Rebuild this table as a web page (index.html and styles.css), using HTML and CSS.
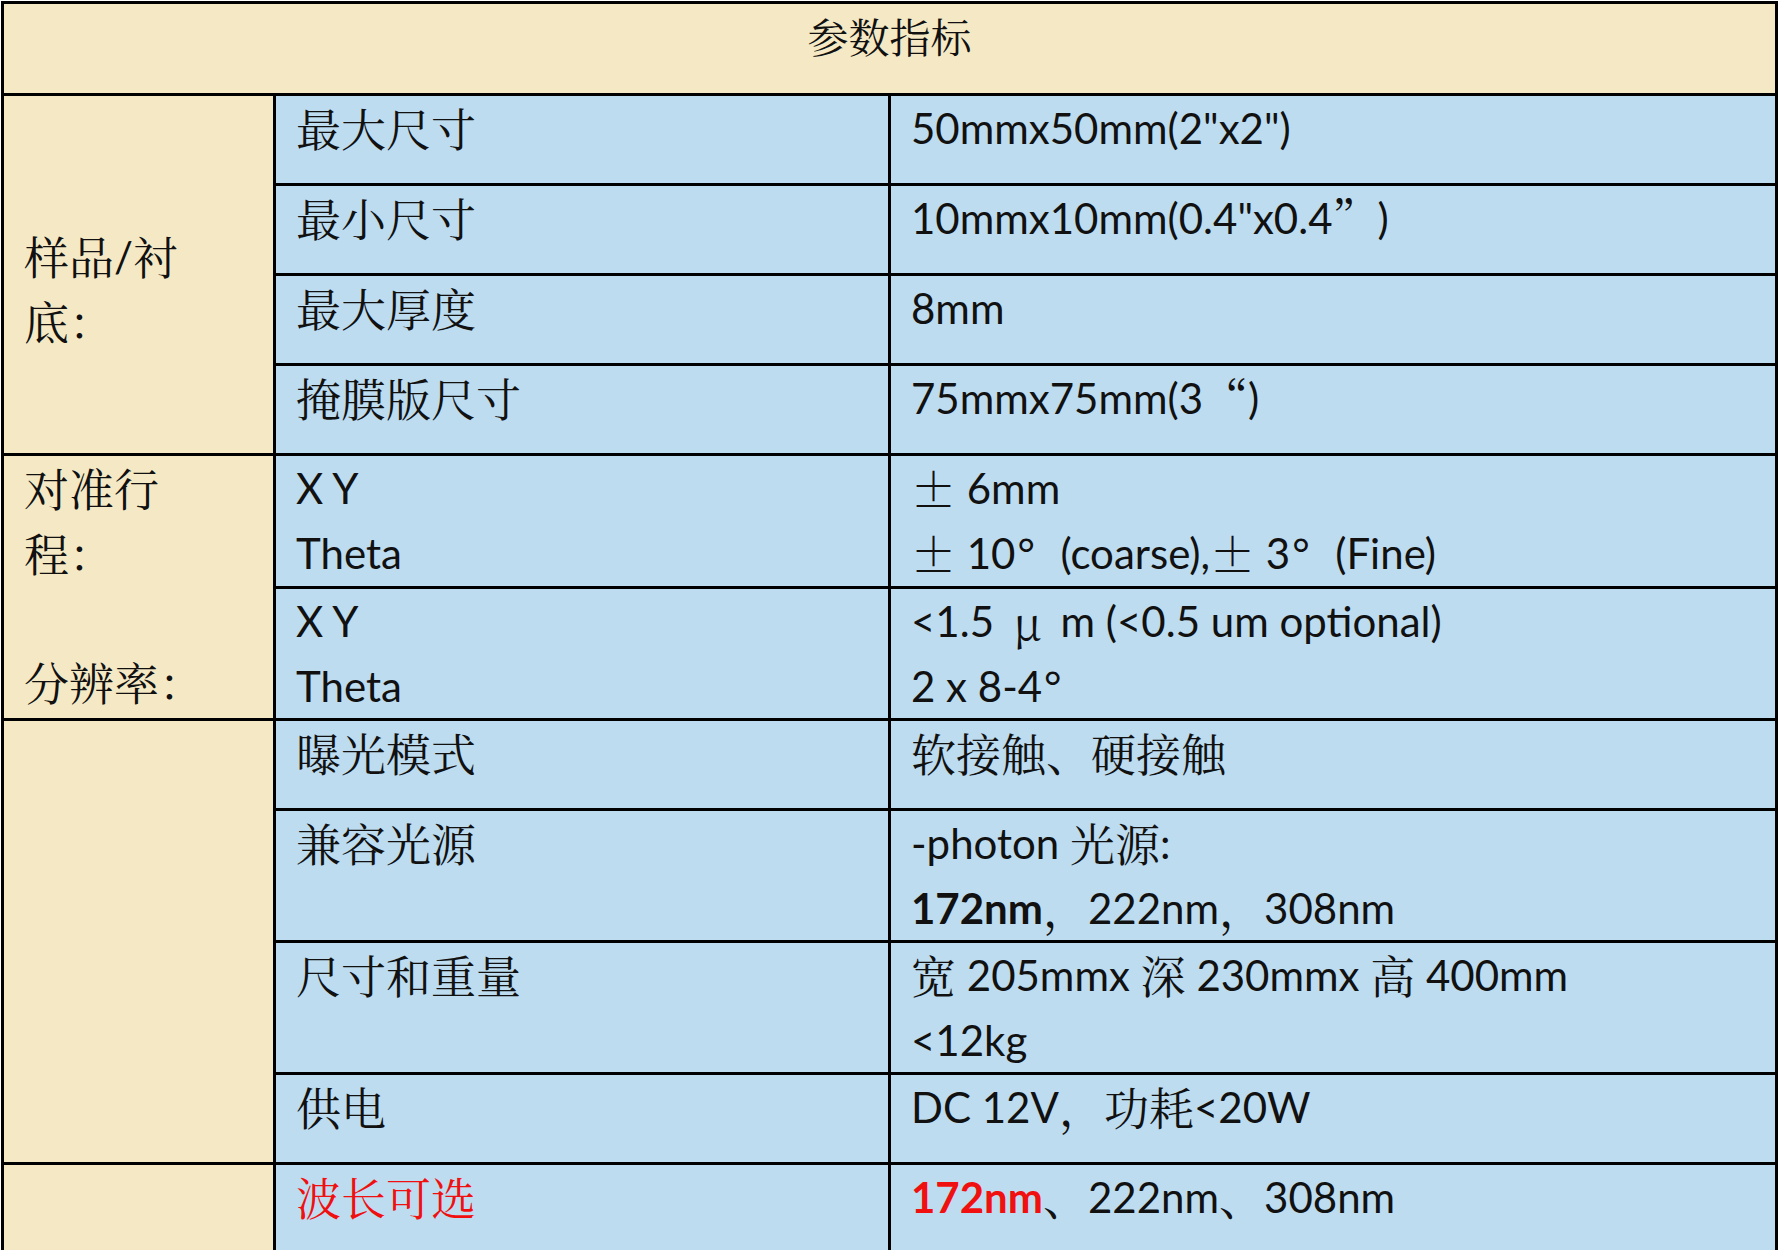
FILE: index.html
```html
<!DOCTYPE html>
<html lang="zh-CN">
<head>
<meta charset="utf-8">
<title>参数指标</title>
<link rel="stylesheet" href="styles.css">
</head>
<body>
<table class="spec">
  <colgroup>
    <col class="c1">
    <col class="c2">
    <col class="c3">
  </colgroup>
  <thead>
    <tr class="h-head">
      <th colspan="3" class="title">参数指标</th>
    </tr>
  </thead>
  <tbody>
    <tr class="h1">
      <td rowspan="4" class="cat cat-sample"><span class="zh">样品</span>/<span class="zh">衬</span><br><span class="zh">底：</span></td>
      <td class="item zh">最大尺寸</td>
      <td class="val">50mmx50mm(2"x2")</td>
    </tr>
    <tr class="h1">
      <td class="item zh">最小尺寸</td>
      <td class="val">10mmx10mm(0.4"x0.4<span class="q-r">”</span>)</td>
    </tr>
    <tr class="h1">
      <td class="item zh">最大厚度</td>
      <td class="val">8mm</td>
    </tr>
    <tr class="h1">
      <td class="item zh">掩膜版尺寸</td>
      <td class="val">75mmx75mm(3<span class="q-l">“</span>)</td>
    </tr>
    <tr class="h2a">
      <td rowspan="2" class="cat zh">对准行<br>程：<br><br>分辨率：</td>
      <td class="item">X Y<br>Theta</td>
      <td class="val"><span class="fw">±</span> 6mm<br><span class="fw">±</span> 10<span class="deg">°</span>(coarse),<span class="fw">±</span> 3<span class="deg">°</span>(Fine)</td>
    </tr>
    <tr class="h2b">
      <td class="item">X Y<br>Theta</td>
      <td class="val">&lt;1.5 <span class="fw">μ</span> m (&lt;0.5 um optional)<br>2 x 8-4<span class="deg">°</span></td>
    </tr>
    <tr class="h1">
      <td rowspan="4" class="cat"></td>
      <td class="item zh">曝光模式</td>
      <td class="val zh">软接触、硬接触</td>
    </tr>
    <tr class="h2b">
      <td class="item zh">兼容光源</td>
      <td class="val">-photon <span class="zh">光源</span>:<br><b>172nm</b><span class="zh">，</span>222nm<span class="zh">，</span>308nm</td>
    </tr>
    <tr class="h2b">
      <td class="item zh">尺寸和重量</td>
      <td class="val"><span class="zh">宽</span> 205mmx <span class="zh">深</span> 230mmx <span class="zh">高</span> 400mm<br>&lt;12kg</td>
    </tr>
    <tr class="h1">
      <td class="item zh">供电</td>
      <td class="val">DC 12V<span class="zh">，功耗</span>&lt;20W</td>
    </tr>
    <tr class="h1">
      <td class="cat"></td>
      <td class="item zh red">波长可选</td>
      <td class="val"><b class="red">172nm</b><span class="zh">、</span>222nm<span class="zh">、</span>308nm</td>
    </tr>
  </tbody>
</table>
</body>
</html>
```
FILE: styles.css
```css
html, body {
  margin: 0;
  padding: 0;
  background: #ffffff;
}

body {
  padding: 1px 0 0 1px;
}

.spec {
  border-collapse: collapse;
  table-layout: fixed;
  width: 1774px;
  font-family: Lato, "Noto Sans CJK SC", sans-serif;
  font-size: 42px;
  line-height: 64.5px;
  color: #111111;
}

.c1 { width: 272px; }
.c2 { width: 615px; }
.c3 { width: 887px; }

.spec th,
.spec td {
  border: 3px solid #000000;
  padding: 0 20px;
  vertical-align: top;
  text-align: left;
  font-weight: normal;
}

.spec th.title {
  background: #f5e9c5;
  text-align: center;
  font-family: "Noto Serif CJK SC", "Noto Sans CJK SC", sans-serif;
  font-size: 41px;
}

.h-head { height: 92px; }
.h1 { height: 90px; }
.h2a { height: 133px; }
.h2b { height: 132px; }

.spec td.cat {
  background: #f5e9c5;
}

.spec td.cat-sample {
  padding-top: 128px;
}

.spec td.item,
.spec td.val {
  background: #bddcf0;
}

.zh {
  font-family: "Noto Serif CJK SC", "Noto Sans CJK SC", sans-serif;
  font-size: 45px;
}

span.zh {
  vertical-align: top;
}

.fw,
.q-r,
.q-l {
  display: inline-block;
  width: 45px;
  vertical-align: top;
  font-family: "Noto Serif CJK SC", "Noto Sans CJK SC", sans-serif;
  font-size: 45px;
}

.fw { text-align: center; }
.q-r { text-align: left; }
.q-l { text-align: right; }

.deg {
  display: inline-block;
  width: 45px;
  padding-left: 2px;
  box-sizing: border-box;
  vertical-align: top;
  text-align: left;
}

b {
  font-weight: 700;
}

.red {
  color: #f01010;
}
```
